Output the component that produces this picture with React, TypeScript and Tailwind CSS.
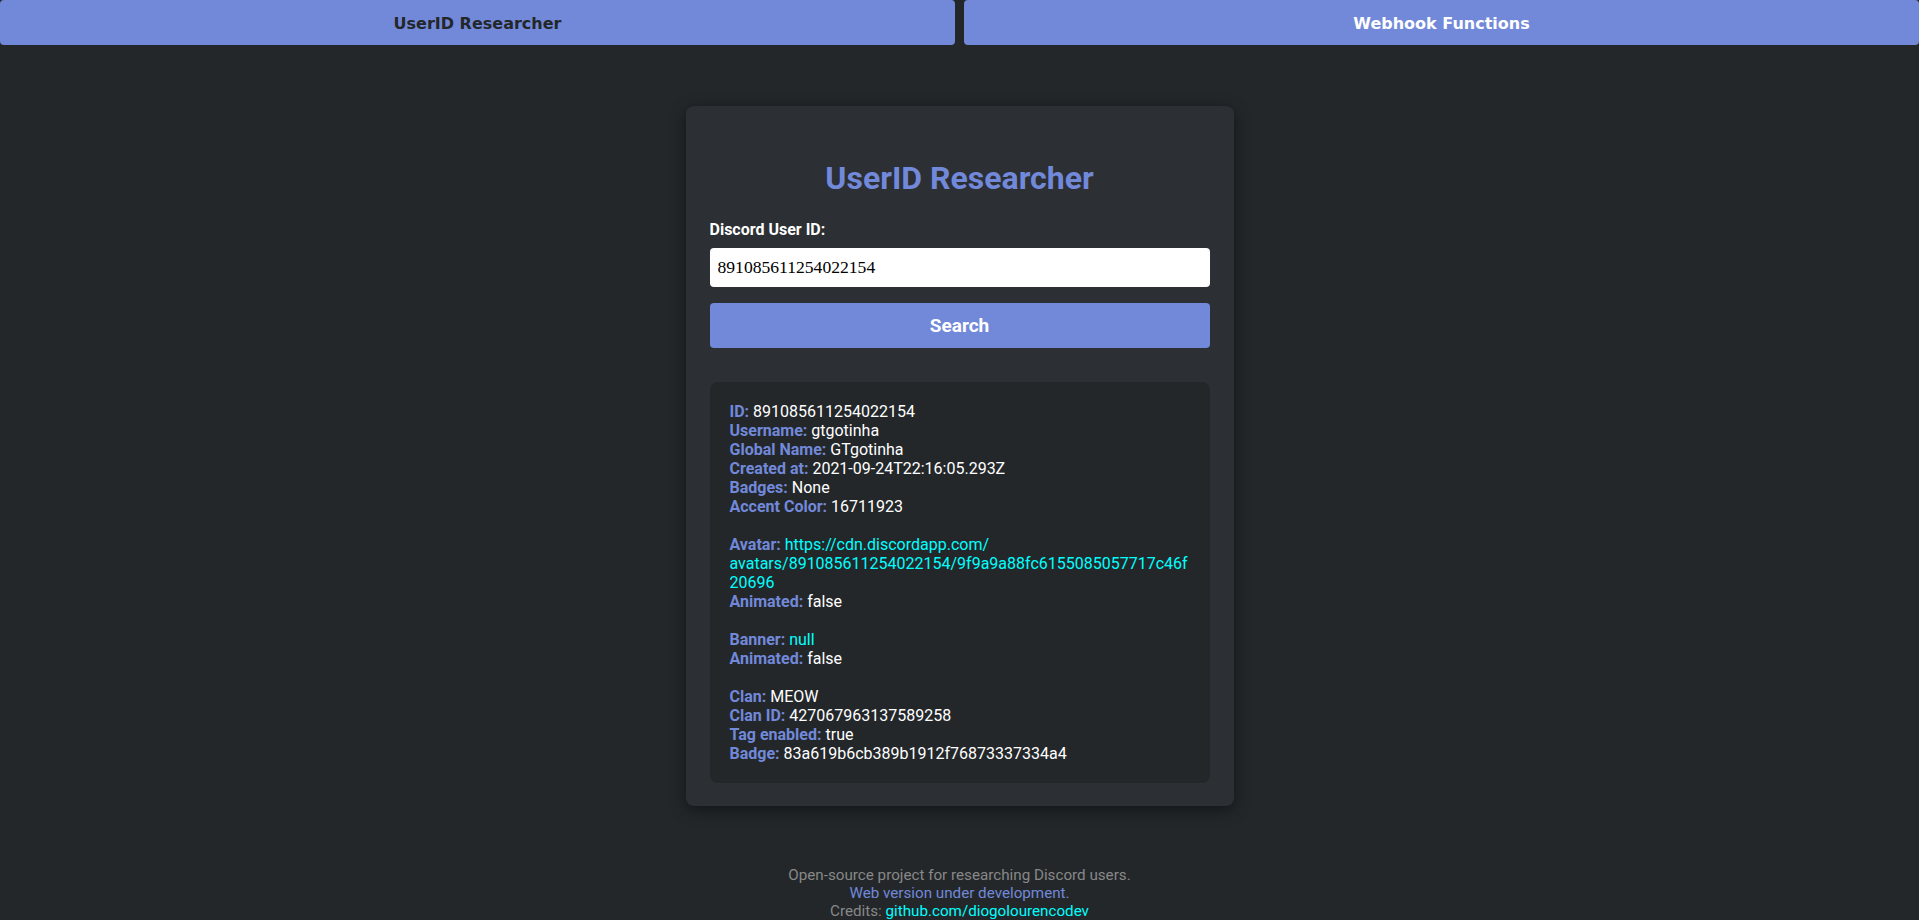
import { useState } from 'react'

const BLUE = 'text-[#7289da]'

type Line = { label: string; value: string[]; link?: boolean } | null

const LINES: Line[] = [
  { label: 'ID', value: ['891085611254022154'] },
  { label: 'Username', value: ['gtgotinha'] },
  { label: 'Global Name', value: ['GTgotinha'] },
  { label: 'Created at', value: ['2021-09-24T22:16:05.293Z'] },
  { label: 'Badges', value: ['None'] },
  { label: 'Accent Color', value: ['16711923'] },
  null,
  {
    label: 'Avatar',
    value: ['https://cdn.discordapp.com/', 'avatars/891085611254022154/9f9a9a88fc6155085057717c46f20696'],
    link: true,
  },
  { label: 'Animated', value: ['false'] },
  null,
  { label: 'Banner', value: ['null'], link: true },
  { label: 'Animated', value: ['false'] },
  null,
  { label: 'Clan', value: ['MEOW'] },
  { label: 'Clan ID', value: ['427067963137589258'] },
  { label: 'Tag enabled', value: ['true'] },
  { label: 'Badge', value: ['83a619b6cb389b1912f76873337334a4'] },
]

export default function App() {
  const [tab, setTab] = useState<'user' | 'webhook'>('user')
  const [userId, setUserId] = useState('891085611254022154')

  return (
    <div className="min-h-screen bg-[#23272a] font-['Roboto',sans-serif] text-white">
      {/* Tabs */}
      <div className="flex gap-[9px]">
        <button
          onClick={() => setTab('user')}
          className={`flex-1 h-[45px] pt-[2px] rounded-[4px] bg-[#7289da] font-['DejaVu_Sans',sans-serif] text-[16px] font-bold ${
            tab === 'user' ? 'text-[#23272a]' : 'text-white'
          }`}
        >
          UserID Researcher
        </button>
        <button
          onClick={() => setTab('webhook')}
          className={`flex-1 h-[45px] pt-[2px] rounded-[4px] bg-[#7289da] font-['DejaVu_Sans',sans-serif] text-[16px] font-bold ${
            tab === 'webhook' ? 'text-[#23272a]' : 'text-white'
          }`}
        >
          Webhook Functions
        </button>
      </div>

      {/* Card */}
      <div className="mx-auto mt-[61px] w-[548px] rounded-lg bg-[#2c2f33] px-6 pt-6 pb-[23px] shadow-[0_4px_16px_rgba(0,0,0,0.45)]">
        <h1 className={`mt-[29px] mb-[23px] text-center text-[32px] leading-[38px] font-bold ${BLUE}`}>
          UserID Researcher
        </h1>

        <label className="mb-[9px] block text-[16px] leading-[19px] font-bold text-white">Discord User ID:</label>
        <input
          value={userId}
          onChange={e => setUserId(e.target.value)}
          className="block h-[39px] w-full rounded-[4px] bg-white px-2 font-['Liberation_Serif',serif] text-[17.6px] text-black outline-none"
        />
        <button className="mt-4 h-[45px] pt-px w-full rounded-[4px] bg-[#7289da] text-[19px] font-bold text-white">
          Search
        </button>

        <div className="mt-[34px] rounded-lg bg-[#23272a] p-5 text-[16px] leading-[19px] break-words">
          {LINES.map((line, i) =>
            line === null ? (
              <div key={i} className="h-[19px]" />
            ) : (
              <div key={i}>
                <span className={`font-bold ${BLUE}`}>{line.label}:</span>{' '}
                <span className={line.link ? 'text-[#00ffff]' : 'text-white'}>
                  {line.value.map((part, j) => (
                    <span key={j}>
                      {j > 0 && <wbr />}
                      {part}
                    </span>
                  ))}
                </span>
              </div>
            )
          )}
        </div>
      </div>

      {/* Footer */}
      <div className="mt-[60px] pb-5 text-center text-[15.2px] leading-[18px] text-[#888888]">
        <div>Open-source project for researching Discord users.</div>
        <div className={BLUE}>Web version under development.</div>
        <div>
          Credits: <span className="text-[#00ffff]">github.com/diogolourencodev</span>
        </div>
      </div>
    </div>
  )
}
